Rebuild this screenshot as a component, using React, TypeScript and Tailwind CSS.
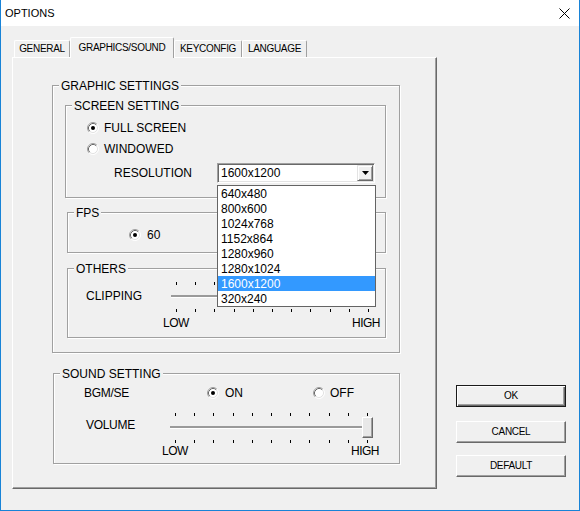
import React from "react";

const resolutions = ["640x480", "800x600", "1024x768", "1152x864", "1280x960", "1280x1024", "1600x1200", "320x240"];

function Radio({ checked }: { checked?: boolean }) {
  return (
    <svg width="12" height="12" viewBox="0 0 12 12" className="shrink-0">
      <circle cx="6" cy="6" r="5" fill="#fff" />
      <path d="M2.11 9.89 A5.5 5.5 0 0 1 9.89 2.11" fill="none" stroke="#a0a0a0" />
      <path d="M9.89 2.11 A5.5 5.5 0 0 1 2.11 9.89" fill="none" stroke="#fff" />
      <path d="M2.82 9.18 A4.5 4.5 0 0 1 9.18 2.82" fill="none" stroke="#696969" />
      <path d="M9.18 2.82 A4.5 4.5 0 0 1 2.82 9.18" fill="none" stroke="#e3e3e3" />
      {checked && <circle cx="6" cy="6" r="2" fill="#000" />}
    </svg>
  );
}

function Group({ title, className, children }: { title: string; className: string; children?: React.ReactNode }) {
  return (
    <div className={`relative border border-[#a0a0a0] shadow-[1px_1px_0_#fff,inset_1px_1px_0_#fff] ${className}`}>
      <span className="absolute left-[6px] top-[-7px] bg-[#f0f0f0] px-[2px] leading-[14px] whitespace-nowrap">{title}</span>
      {children}
    </div>
  );
}

function Ticks() {
  return (
    <div className="flex justify-between px-[5px] h-[3px]">
      {Array.from({ length: 11 }).map((_, i) => (
        <div key={i} className="w-px h-[3px] bg-black" />
      ))}
    </div>
  );
}

function Slider({ labelGap }: { labelGap: string }) {
  return (
    <div className="relative w-[203px]">
      <Ticks />
      <div className="mt-[10px] h-[3px] bg-[#9a9a9a] border-b border-white" />
      <div className="mt-[11px]">
        <Ticks />
      </div>
      <div className={`-ml-[8px] -mr-[6px] flex justify-between tracking-[-0.5px] ${labelGap}`}>
        <span>LOW</span>
        <span>HIGH</span>
      </div>
      <div className="absolute right-0 top-[4px] w-[11px] h-[21px] bg-[#e8e8e8] border-t border-l border-white border-r border-b border-r-[#696969] border-b-[#696969] shadow-[inset_-1px_-1px_0_#a0a0a0]" />
    </div>
  );
}

function Tab({ label, width, selected }: { label: string; width: string; selected?: boolean }) {
  return (
    <div
      className={`${width} ${selected ? "h-[21px] -mb-px" : "h-[17px]"} bg-[#f0f0f0] flex items-center justify-center text-[10px] tracking-[-0.3px] border-t border-l border-white border-r border-r-[#a0a0a0] rounded-t-[2px] whitespace-nowrap`}
    >
      {label}
    </div>
  );
}

function Button({ label, isDefault, className = "" }: { label: string; isDefault?: boolean; className?: string }) {
  const frame = isDefault
    ? "border border-[#1a1a1a] shadow-[inset_1px_1px_0_#fff,inset_-1px_-1px_0_#696969,inset_-2px_-2px_0_#a0a0a0]"
    : "border-t border-l border-white border-r border-b border-r-[#696969] border-b-[#696969] shadow-[inset_-1px_-1px_0_#a0a0a0]";
  return (
    <div className={`w-[110px] h-[22px] bg-[#f0f0f0] flex items-center justify-center text-[10px] tracking-[-0.3px] ${frame} ${className}`}>
      {label}
    </div>
  );
}

export default function App() {
  return (
    <div className="w-[580px] h-[511px] bg-[#f0f0f0] border-x border-b border-[#1883d7] flex flex-col font-['Liberation_Sans',Arial,sans-serif] text-[12px] leading-[14px] text-black overflow-hidden">
      {/* title bar */}
      <div className="h-[26px] shrink-0 bg-white flex items-center justify-between pl-[4px] pr-[9px]">
        <span className="text-[11px]">OPTIONS</span>
        <svg width="11" height="11" viewBox="0 0 11 11">
          <path d="M0.5 0.5 L10.5 10.5 M10.5 0.5 L0.5 10.5" stroke="#000" strokeWidth="1" />
        </svg>
      </div>

      <div className="flex pl-[11px] pt-[11px]">
        {/* tab control */}
        <div className="w-[425px] flex flex-col">
          <div className="relative z-10 flex items-end h-[20px] pl-[2px]">
            <Tab label="GENERAL" width="w-[56px]" />
            <Tab label="GRAPHICS/SOUND" width="w-[104px]" selected />
            <Tab label="KEYCONFIG" width="w-[68px]" />
            <Tab label="LANGUAGE" width="w-[65px]" />
          </div>

          <div className="h-[432px] flex flex-col border-t border-l border-white border-r border-b border-r-[#696969] border-b-[#696969] shadow-[inset_-1px_-1px_0_#a0a0a0]">
            <Group title="GRAPHIC SETTINGS" className="ml-[39px] mt-[27px] w-[348px] h-[268px] flex flex-col">
              <Group title="SCREEN SETTING" className="ml-[12px] mt-[19px] w-[321px] h-[93px] pt-[11px] pl-[21px]">
                <div className="flex items-center h-[21px] gap-[5px]">
                  <Radio checked />
                  <span>FULL SCREEN</span>
                </div>
                <div className="flex items-center h-[21px] gap-[5px]">
                  <Radio />
                  <span>WINDOWED</span>
                </div>
                <div className="mt-[4px] flex items-center h-[20px] pl-[27px]">
                  <span className="w-[103px]">RESOLUTION</span>
                  <div className="relative w-[158px] h-[20px] bg-white flex items-center border-t border-l border-[#a0a0a0] border-r-white border-b-white border-r border-b shadow-[inset_1px_1px_0_#696969,inset_-1px_-1px_0_#e3e3e3]">
                    <span className="flex-1 pl-[3px]">1600x1200</span>
                    <div className="w-[16px] h-[16px] mr-[1px] bg-[#f0f0f0] flex items-center justify-center border-t border-l border-[#e3e3e3] border-r border-b border-r-[#696969] border-b-[#696969] shadow-[inset_1px_1px_0_#fff,inset_-1px_-1px_0_#a0a0a0]">
                      <svg width="7" height="4" viewBox="0 0 7 4">
                        <path d="M0 0 H7 L3.5 4 Z" fill="#000" />
                      </svg>
                    </div>
                    <div className="absolute left-[-1px] top-[21px] z-20 w-[159px] bg-white border border-[#646464] flex flex-col">
                      {resolutions.map((r) => (
                        <div
                          key={r}
                          className={`h-[15px] pl-[3px] flex items-center ${r === "1600x1200" ? "bg-[#3399ff] text-white" : ""}`}
                        >
                          {r}
                        </div>
                      ))}
                    </div>
                  </div>
                </div>
              </Group>

              <Group title="FPS" className="ml-[14px] mt-[14px] w-[319px] h-[41px] pt-[12px] pl-[61px]">
                <div className="flex items-center h-[20px] gap-[6px]">
                  <Radio checked />
                  <span>60</span>
                </div>
              </Group>

              <Group title="OTHERS" className="ml-[14px] mt-[15px] w-[319px] h-[70px] pt-[13px] pl-[18px] flex items-start">
                <span className="w-[85px] mt-[7px]">CLIPPING</span>
                <Slider labelGap="mt-[4px]" />
              </Group>
            </Group>

            <Group title="SOUND SETTING" className="ml-[40px] mt-[20px] w-[347px] h-[91px] pt-[12px] pl-[30px]">
              <div className="flex items-center h-[14px]">
                <span className="w-[123px] tracking-[-0.3px]">BGM/SE</span>
                <div className="w-[106px] flex items-center gap-[6px]">
                  <Radio checked />
                  <span>ON</span>
                </div>
                <div className="flex items-center gap-[5px]">
                  <Radio />
                  <span>OFF</span>
                </div>
              </div>
              <div className="mt-[13px] flex items-start pl-[2px]">
                <span className="w-[84px] mt-[5px] tracking-[-0.3px]">VOLUME</span>
                <Slider labelGap="mt-[1px]" />
              </div>
            </Group>
          </div>
        </div>

        {/* buttons */}
        <div className="ml-[19px] pt-[348px] flex flex-col">
          <Button label="OK" isDefault />
          <Button label="CANCEL" className="mt-[14px]" />
          <Button label="DEFAULT" className="mt-[12px]" />
        </div>
      </div>
    </div>
  );
}
